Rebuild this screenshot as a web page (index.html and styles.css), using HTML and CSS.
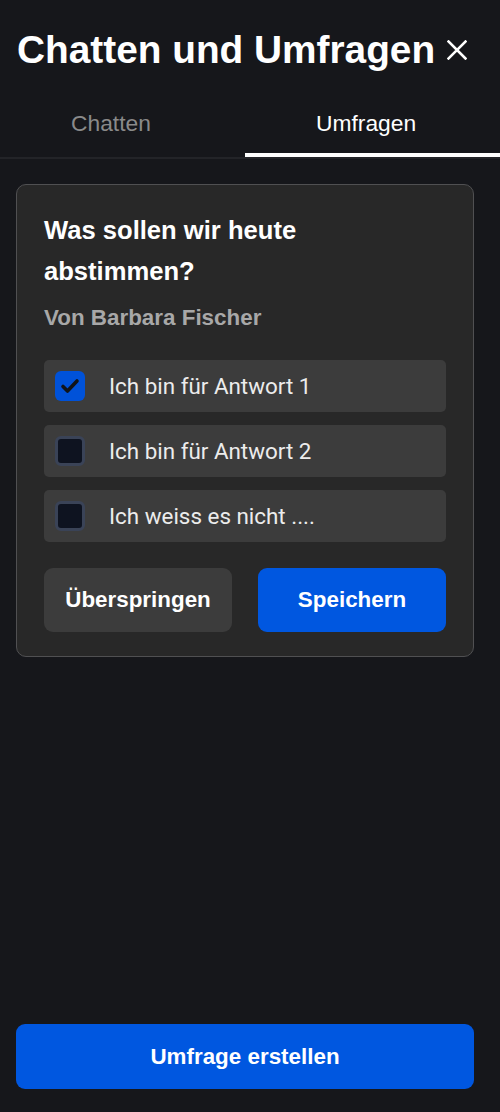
FILE: index.html
```html
<!DOCTYPE html>
<html lang="de">
<head>
<meta charset="utf-8">
<title>Chatten und Umfragen</title>
<link rel="stylesheet" href="styles.css">
</head>
<body>
<div class="panel">
  <header class="header">
    <h1 class="title">Chatten und Umfragen</h1>
    <button class="close" aria-label="Schließen">
      <svg width="20" height="20" viewBox="0 0 20 20"><path d="M1.5 1.5 L18.5 18.5 M18.5 1.5 L1.5 18.5" stroke="#fff" stroke-width="2.5" stroke-linecap="square" fill="none"/></svg>
    </button>
  </header>
  <nav class="tabs">
    <div class="tab">Chatten</div>
    <div class="tab active">Umfragen</div>
  </nav>
  <main class="content">
    <section class="card">
      <h2 class="question">Was sollen wir heute abstimmen?</h2>
      <p class="author">Von Barbara Fischer</p>
      <div class="options">
        <label class="option">
          <span class="box checked"><svg width="30" height="30" viewBox="0 0 30 30"><path d="M8 15.5 L12.5 20 L22 10" stroke="#111418" stroke-width="3.6" fill="none" stroke-linecap="round" stroke-linejoin="round"/></svg></span>
          <span class="label">Ich bin für Antwort 1</span>
        </label>
        <label class="option">
          <span class="box"></span>
          <span class="label">Ich bin für Antwort 2</span>
        </label>
        <label class="option">
          <span class="box"></span>
          <span class="label">Ich weiss es nicht ....</span>
        </label>
      </div>
      <div class="actions">
        <button class="btn btn-secondary">Überspringen</button>
        <button class="btn btn-primary">Speichern</button>
      </div>
    </section>
  </main>
  <footer class="footer">
    <button class="btn btn-primary btn-wide">Umfrage erstellen</button>
  </footer>
</div>
</body>
</html>
```

FILE: styles.css
```css
* { box-sizing: border-box; }
html, body {
  margin: 0;
  padding: 0;
  background: #16171b;
}
body {
  font-family: "Liberation Sans", Arial, sans-serif;
  color: #fff;
}
.panel {
  display: flex;
  flex-direction: column;
  min-height: 1112px;
}
.header {
  display: flex;
  align-items: center;
  padding: 27px 0 27px 17px;
  gap: 12px;
}
.title {
  margin: 0;
  font-size: 38.8px;
  line-height: 46px;
  font-weight: 700;
  color: #fff;
}
.close {
  background: none;
  border: 0;
  padding: 0;
  width: 20px;
  height: 20px;
  display: flex;
}
.tabs {
  display: flex;
  border-bottom: 2px solid #232428;
}
.tab {
  font-size: 22.8px;
  line-height: 27px;
  color: #8a8a8a;
  padding: 10px 0 16px 71px;
  border-bottom: 4px solid transparent;
  width: 245px;
}
.tab.active {
  color: #fff;
  border-bottom-color: #fff;
  width: 255px;
}
.content {
  flex: 1;
  padding: 25px 26px 0 16px;
}
.card {
  background: #282828;
  border: 1px solid #505052;
  border-radius: 10px;
  padding: 25px 27px 24px 27px;
}
.question {
  margin: 0;
  font-size: 25.6px;
  line-height: 41px;
  font-weight: 700;
  max-width: 300px;
  color: #fff;
}
.author {
  margin: 9px 0 0 0;
  font-size: 22.4px;
  line-height: 33.6px;
  font-weight: 700;
  color: #a8a8a8;
}
.options {
  margin-top: 25px;
  display: flex;
  flex-direction: column;
  gap: 13px;
}
.option {
  display: flex;
  align-items: center;
  height: 52px;
  background: #3c3c3c;
  border-radius: 5px;
  padding-left: 11px;
}
.box {
  width: 30px;
  height: 30px;
  border-radius: 6px;
  background: #0e1320;
  border: 3px solid #3a4357;
  flex: none;
  display: flex;
}
.box.checked {
  background: #0052d9;
  border: 0;
}
.label {
  margin-left: 24px;
  font-family: Roboto, "Liberation Sans", sans-serif;
  font-size: 22.4px;
  color: #ececec;
}
.actions {
  margin-top: 26px;
  display: grid;
  grid-template-columns: 1fr 1fr;
  gap: 26px;
}
.btn {
  font-family: "Liberation Sans", Arial, sans-serif;
  font-size: 22.4px;
  font-weight: 700;
  height: 64px;
  border: 0;
  border-radius: 9px;
  color: #fff;
  cursor: pointer;
}
.btn-secondary { background: #3c3c3c; }
.btn-primary { background: #0057e0; }
.footer {
  padding: 0 26px 23px 16px;
  display: flex;
}
.btn-wide {
  flex: 1;
  height: 65px;
}
```
